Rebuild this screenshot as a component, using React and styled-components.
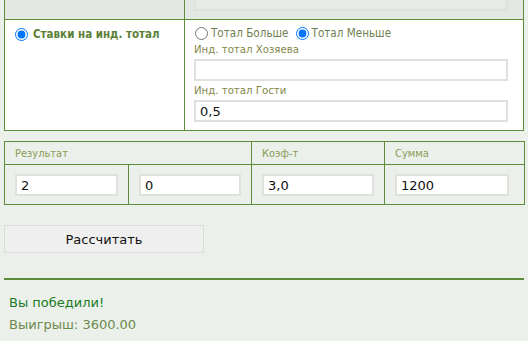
import React from "react";
import styled, { createGlobalStyle } from "styled-components";

const GlobalStyle = createGlobalStyle`
    html, body {
        margin: 0;
        padding: 0;
        background: #ebf1ea;
        font-family: "DejaVu Sans Condensed", "DejaVu Sans", Verdana, sans-serif;
    }
`

const Page = styled.div`
    padding: 0 4px;
    width: 520px;
`

const FormTable = styled.table`
    border-collapse: collapse;
    width: 520px;
    table-layout: fixed;
    margin-top: ${p => p.$offset || 0}px;
`

const Cell = styled.td`
    border: 1px solid #5d8c3b;
    vertical-align: top;
    padding: ${p => p.$pad || "0"};
    background: ${p => p.$muted ? "#e3e9e2" : "#fff"};
`

const OptionLabel = styled.label`
    display: flex;
    align-items: center;
    gap: ${p => p.$bold ? "5px" : "3px"};
    height: 14px;
    font-size: ${p => p.$bold ? "11.5px" : "11.6px"};
    color: ${p => p.$bold ? "#5c8035" : "#6f8050"};
    font-weight: ${p => p.$bold ? 700 : 400};
`

const Radio = styled.input.attrs({ type: "radio" })`
    margin: 0 0 0 ${p => p.$shift || 0}px;
    width: 13px;
    height: 13px;
`

const RadioRow = styled.div`
    display: flex;
    gap: 7px;
`

const Stack = styled.div`
    display: flex;
    flex-direction: column;
`

const FieldLabel = styled.span`
    margin-top: 3px;
    height: 14px;
    line-height: 14px;
    font-size: 11.3px;
    color: #84874a;
`

const TextInput = styled.input`
    box-sizing: border-box;
    width: 100%;
    height: 22px;
    margin-top: ${p => p.$top || 0}px;
    padding: 0 4px;
    border: 2px solid #e0e1df;
    background: ${p => p.disabled ? "#e6ebe5" : "#fff"};
    font-family: "DejaVu Sans", Verdana, sans-serif;
    font-size: 13px;
    color: #111;
    outline: none;
`

const BetTable = styled.table`
    border-collapse: collapse;
    width: 520px;
    table-layout: fixed;
    margin-top: 10px;
`

const HeadCell = styled.td`
    border: 1px solid #5d8c3b;
    height: 22px;
    padding: 0 10px;
    font-size: 11px;
    color: #8a9a58;
`

const InputCell = styled.td`
    border: 1px solid #5d8c3b;
    padding: 9px ${p => p.$right || 10}px 8px 10px;
`

const CalcButton = styled.button`
    display: block;
    margin-top: 20px;
    width: 200px;
    height: 28px;
    background: #efefef;
    border: 1px solid #dcdcdc;
    font-family: "DejaVu Sans", Verdana, sans-serif;
    font-size: 13px;
    color: #111;
`

const Divider = styled.hr`
    margin: 25px 0 0;
    border: 0;
    height: 2px;
    background: #5d8c3b;
`

const Result = styled.div`
    padding: 16px 5px 0;
    display: flex;
    flex-direction: column;
    gap: 8px;
`

const ResultLine = styled.p`
    margin: 0;
    font-family: "DejaVu Sans", Verdana, sans-serif;
    font-size: 13px;
    line-height: 14px;
    color: ${p => p.$win ? "#1a7a25" : "#6c8a4d"};
`

const App = () => {
    return (
        <Page>
            <GlobalStyle />

            <FormTable $offset={-21}>
                <colgroup>
                    <col style={{ width: 180 }} />
                    <col />
                </colgroup>
                <tbody>
                    <tr>
                        <Cell $muted $pad="8px 10px" />
                        <Cell $muted $pad="9px 15px 8px 9px">
                            <TextInput disabled />
                        </Cell>
                    </tr>
                    <tr>
                        <Cell $pad="7px 10px">
                            <OptionLabel $bold>
                                <Radio name="mode" defaultChecked />
                                Ставки на инд. тотал
                            </OptionLabel>
                        </Cell>
                        <Cell $pad="6px 15px 8px 9px">
                            <Stack>
                                <RadioRow>
                                    <OptionLabel>
                                        <Radio name="side" $shift={1} />
                                        Тотал Больше
                                    </OptionLabel>
                                    <OptionLabel>
                                        <Radio name="side" defaultChecked />
                                        Тотал Меньше
                                    </OptionLabel>
                                </RadioRow>
                                <FieldLabel>Инд. тотал Хозяева</FieldLabel>
                                <TextInput $top={2} />
                                <FieldLabel>Инд. тотал Гости</FieldLabel>
                                <TextInput $top={2} defaultValue="0,5" />
                            </Stack>
                        </Cell>
                    </tr>
                </tbody>
            </FormTable>

            <BetTable>
                <colgroup>
                    <col style={{ width: 124 }} />
                    <col style={{ width: 123 }} />
                    <col style={{ width: 133 }} />
                    <col style={{ width: 140 }} />
                </colgroup>
                <tbody>
                    <tr>
                        <HeadCell colSpan={2}>Результат</HeadCell>
                        <HeadCell>Коэф-т</HeadCell>
                        <HeadCell>Сумма</HeadCell>
                    </tr>
                    <tr>
                        <InputCell><TextInput defaultValue="2" /></InputCell>
                        <InputCell><TextInput defaultValue="0" /></InputCell>
                        <InputCell><TextInput defaultValue="3,0" /></InputCell>
                        <InputCell $right={15}><TextInput defaultValue="1200" /></InputCell>
                    </tr>
                </tbody>
            </BetTable>

            <CalcButton>Рассчитать</CalcButton>

            <Divider />

            <Result>
                <ResultLine $win>Вы победили!</ResultLine>
                <ResultLine>Выигрыш: 3600.00</ResultLine>
            </Result>
        </Page>
    )
}

export default App;
